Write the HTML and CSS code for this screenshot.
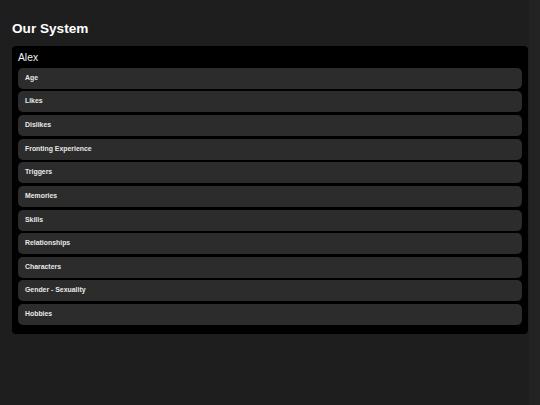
FILE: index.html
```html
<!DOCTYPE html>
<html lang="en">
<head>
<meta charset="utf-8">
<title>Our System</title>
<link rel="stylesheet" href="styles.css">
</head>
<body>
<h1 class="title">Our System</h1>
<section class="card">
  <h2 class="name">Alex</h2>
  <div class="rows">
    <div class="row">Age</div>
    <div class="row">Likes</div>
    <div class="row">Dislikes</div>
    <div class="row">Fronting Experience</div>
    <div class="row">Triggers</div>
    <div class="row">Memories</div>
    <div class="row">Skills</div>
    <div class="row">Relationships</div>
    <div class="row">Characters</div>
    <div class="row">Gender - Sexuality</div>
    <div class="row">Hobbies</div>
  </div>
</section>
</body>
</html>
```
FILE: styles.css
```css
html, body {
  margin: 0;
  padding: 0;
}
body {
  background: linear-gradient(to right, #1e1e1e 529px, #232323 529px);
  min-height: 405px;
  padding: 20.8px 12px 12px;
  box-sizing: border-box;
  font-family: "Liberation Sans", Arial, sans-serif;
  color: #fff;
}
.title {
  margin: 0 0 9.9px;
  font-size: 13.6px;
  font-weight: bold;
  line-height: 15.6px;
  color: #fff;
}
.card {
  background: #000;
  border-radius: 4px;
  padding: 6px 6px 8.7px;
}
.name {
  margin: 0 0 3.9px;
  font-size: 10.3px;
  font-weight: normal;
  line-height: 11.5px;
  color: #f2f2f2;
}
.rows {
  display: flex;
  flex-direction: column;
  gap: 2.65px;
}
.row {
  box-sizing: border-box;
  height: 21px;
  padding: 6px 7px 0;
  background: #2c2c2c;
  border-radius: 5px;
  font-size: 6.9px;
  font-weight: bold;
  line-height: 8px;
  color: #e8e8e8;
}
```
